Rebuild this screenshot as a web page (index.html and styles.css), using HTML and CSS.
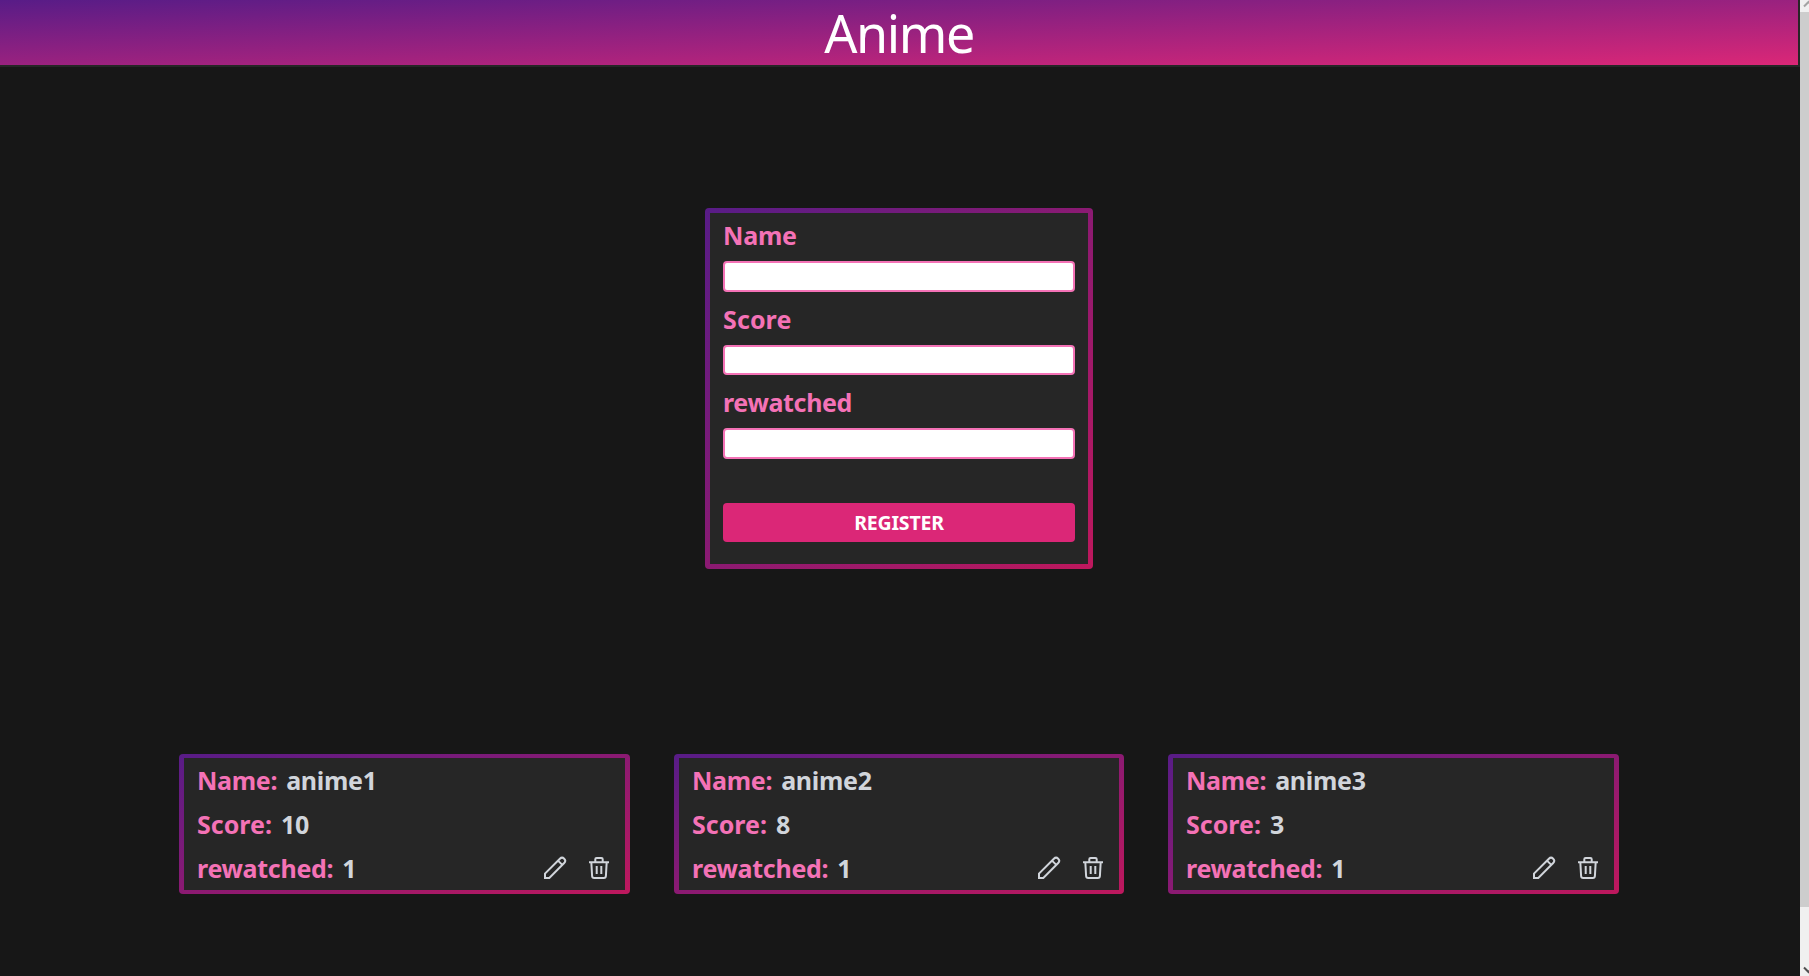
FILE: index.html
```html
<!DOCTYPE html>
<html lang="en">
<head>
<meta charset="utf-8">
<title>Anime</title>
<link rel="stylesheet" href="styles.css">
</head>
<body>
<svg class="defs" width="0" height="0" aria-hidden="true">
  <symbol id="pencil" viewBox="0 0 24 24"><path d="M2 22V17.600L16.900 2.700a3 3 0 0 1 4.300 4.300L6.300 22ZM15 4.600l4.300 4.300"/></symbol>
  <symbol id="trash" viewBox="0 0 24 24"><path d="M2 6.300h20M8.300 5.500V3.300q0-1.300 1.300-1.300h4.800q1.300 0 1.300 1.300v2.200M4.300 6l.8 14q.1 2 2.100 2h9.600q2 0 2.100-2L19.700 6M9.700 10v8M14.300 10v8"/></symbol>
</svg>
<div class="page">
  <header class="header"><h1 class="title">Anime</h1></header>
  <form class="frame form">
    <div class="panel form-panel">
      <label class="label" for="name">Name</label>
      <input class="input" id="name">
      <label class="label label-score" for="score">Score</label>
      <input class="input input-short" id="score">
      <label class="label label-rewatched" for="rewatched">rewatched</label>
      <input class="input" id="rewatched">
      <button class="register" type="button">REGISTER</button>
    </div>
  </form>
  <section class="cards">
    <article class="frame card"><div class="panel card-panel">
      <p class="row"><span class="key">Name:</span><span class="value">anime1</span></p>
      <p class="row"><span class="key key-score">Score:</span><span class="value">10</span></p>
      <p class="row"><span class="key">rewatched:</span><span class="value">1</span><span class="actions"><svg class="icon"><use href="#pencil"/></svg><svg class="icon"><use href="#trash"/></svg></span></p>
    </div></article>
    <article class="frame card"><div class="panel card-panel">
      <p class="row"><span class="key">Name:</span><span class="value">anime2</span></p>
      <p class="row"><span class="key key-score">Score:</span><span class="value">8</span></p>
      <p class="row"><span class="key">rewatched:</span><span class="value">1</span><span class="actions"><svg class="icon"><use href="#pencil"/></svg><svg class="icon"><use href="#trash"/></svg></span></p>
    </div></article>
    <article class="frame card"><div class="panel card-panel">
      <p class="row"><span class="key">Name:</span><span class="value">anime3</span></p>
      <p class="row"><span class="key key-score">Score:</span><span class="value">3</span></p>
      <p class="row"><span class="key">rewatched:</span><span class="value">1</span><span class="actions"><svg class="icon"><use href="#pencil"/></svg><svg class="icon"><use href="#trash"/></svg></span></p>
    </div></article>
  </section>
</div>
<div class="scrollbar">
  <svg class="arrow" viewBox="0 0 9 12"><path d="M4 6.500 8.500 2l4.500 4.500"/></svg>
  <div class="thumb"></div>
  <svg class="arrow arrow-down" viewBox="0 0 9 12"><path d="M4 3.500 8.500 8l4.500-4.500"/></svg>
</div>
</body>
</html>
```
FILE: styles.css
```css
* { box-sizing: border-box; margin: 0; padding: 0; }
body { display: flex; height: 976px; overflow: hidden; background: #171717; font-family: "Noto Sans", "Open Sans", sans-serif; }
.defs { position: absolute; }
.page { width: 1800px; height: 976px; }
.header { height: 67px; border: solid #262626; border-width: 0 2px 2px 0; background: linear-gradient(to bottom right, #581c87, #db2777); }
.title { color: #fff; font-size: 52px; line-height: 65px; font-weight: 400; text-align: center; letter-spacing: -1.4px; }
.frame { border-radius: 4px; background: linear-gradient(to bottom right, #581c87, #be185d); }
.panel { height: 100%; background: #262626; }
.form { width: 388px; height: 361px; margin: 141px auto 0 705px; padding: 5px; }
.form-panel { display: flex; flex-direction: column; padding: 0 13px; }
.label { height: 36px; margin: 9px 0 8px; color: #f472b6; font-size: 25px; font-weight: 700; line-height: 36px; letter-spacing: -0.2px; }
.label:first-child { margin-top: 4px; }
.label-score { letter-spacing: 0.1px; }
.label-rewatched { letter-spacing: -0.35px; }
.input { height: 31px; border: 2px solid #f472b6; border-radius: 4px; background: #fff; }
.input-short { height: 30px; }
.register { height: 39px; margin-top: 44px; padding-top: 1px; border: 0; border-radius: 4px; background: #db2777; color: #fff; font: 700 19.5px/38px "Noto Sans", sans-serif; letter-spacing: -0.2px; }
.cards { display: grid; grid-template-columns: 451px 450px 451px; column-gap: 44px; margin: 185px 0 0 179px; }
.card { height: 140px; padding: 4px 5px; }
.card-panel { padding: 0 14px 0 13px; }
.row { display: flex; align-items: center; height: 44px; font-size: 25px; font-weight: 700; line-height: 44px; letter-spacing: -0.3px; }
.key { color: #f472b6; margin-right: 9px; }
.key-score { letter-spacing: 0; }
.value { color: #d1d5db; }
.actions { display: flex; gap: 20px; margin-left: auto; }
.icon { width: 24px; height: 24px; fill: none; stroke: #d1d5db; stroke-width: 2; }
.scrollbar { display: flex; flex-direction: column; width: 9px; height: 976px; background: #f0f0f0; }
.arrow { width: 9px; height: 12px; fill: none; stroke: #a3a3a3; stroke-width: 2; }
.thumb { height: 895px; background: #cdcdcd; }
.arrow-down { margin-top: auto; stroke: #505050; }
```
